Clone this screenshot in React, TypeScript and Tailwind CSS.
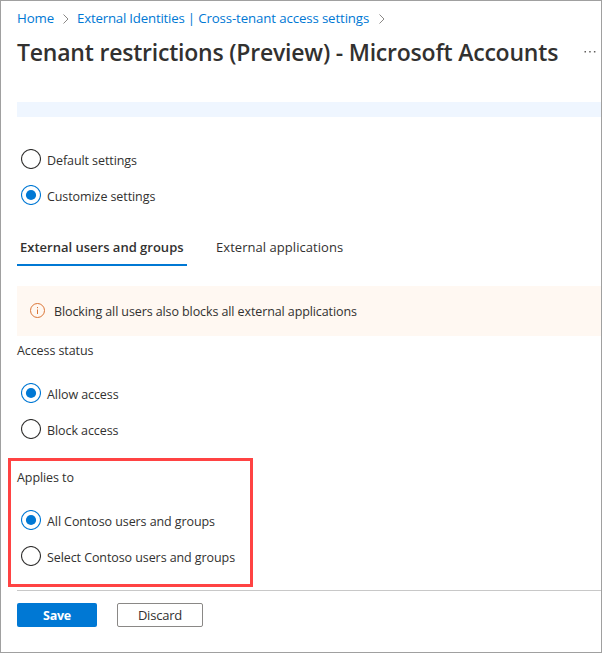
import type { ReactNode } from "react";

function Chevron() {
  return (
    <svg className="h-3 w-2 shrink-0" viewBox="0 0 8 12" fill="none" stroke="#8a8886" strokeWidth="1">
      <path d="M1.5 1.5 6 6 1.5 10.5" />
    </svg>
  );
}

function Radio({ checked = false, children }: { checked?: boolean; children: ReactNode }) {
  return (
    <label className="flex h-5 items-center gap-1.5 pl-1">
      <svg className="h-5 w-5 shrink-0" viewBox="0 0 20 20">
        <circle cx="10" cy="10" r="9.5" fill="#fff" stroke={checked ? "#0078d4" : "#323130"} strokeWidth="1.1" />
        {checked && <circle cx="10" cy="10" r="5.1" fill="#0078d4" />}
      </svg>
      <span className="pt-1 leading-5">{children}</span>
    </label>
  );
}

export default function App() {
  return (
    <div className="flex h-[653px] w-[602px] flex-col overflow-hidden border border-[#a0a0a0] bg-white pl-4 font-['Open_Sans','Noto_Sans',sans-serif] text-[12.5px] tracking-[-0.085px] whitespace-nowrap text-[#323130]">
      <nav className="mt-2 flex h-5 items-center text-[13.25px] tracking-[-0.12px] text-[#0078d4]">
        <a className="w-[45px]">Home</a>
        <Chevron />
        <a className="ml-[7px] w-[301px]">
          <span className="tracking-[-0.2px]">External Identities | </span>
          Cross-tenant access settings
        </a>
        <Chevron />
      </nav>

      <header className="mt-[7px] flex h-8 items-center">
        <h1 className="w-[567px] text-[23px] leading-8 font-semibold tracking-[-0.21px]">
          Tenant restrictions (Preview) - Microsoft Accounts
        </h1>
        <svg className="h-1 w-3 shrink-0" viewBox="0 0 12 4" fill="#605e5c">
          <rect x="0.5" y="1" width="1.5" height="1.5" />
          <rect x="5.2" y="1" width="1.5" height="1.5" />
          <rect x="9.9" y="1" width="1.5" height="1.5" />
        </svg>
      </header>

      <div className="mt-[34px] h-[15px] shrink-0 bg-[#eff6ff]" />

      <div className="mt-8 flex flex-col gap-4">
        <Radio>Default settings</Radio>
        <Radio checked>Customize settings</Radio>
      </div>

      <div className="mt-[25px] flex h-9 text-[13px] leading-[34px]">
        <div className="w-[170px] border-b-2 border-[#0078d4] pl-[3px] font-semibold tracking-normal">
          External users and groups
        </div>
        <div className="ml-[29px] tracking-[0.05px]">External applications</div>
      </div>

      <div className="mt-5 flex h-[50px] shrink-0 items-center gap-[9px] bg-[#fff8f2] pl-3">
        <svg className="h-4 w-4 shrink-0" viewBox="0 0 16 16" fill="none" stroke="#db7536">
          <circle cx="8.5" cy="7.5" r="7" />
          <path d="M8.5 6.5V11M8.5 4v1.2" />
        </svg>
        <span className="pt-0.5 tracking-[-0.1px]">Blocking all users also blocks all external applications</span>
      </div>

      <div className="mt-[5px] h-5 leading-5">Access status</div>
      <div className="mt-[22px] flex flex-col gap-4">
        <Radio checked>Allow access</Radio>
        <Radio>Block access</Radio>
      </div>

      <section className="mt-[19px] -ml-[9px] h-[129px] w-[245px] shrink-0 border-[3px] border-[#ff4343] pl-1.5">
        <div className="mt-[7px] h-5 leading-5">Applies to</div>
        <div className="mt-[22px] flex flex-col gap-4">
          <Radio checked>All Contoso users and groups</Radio>
          <Radio>Select Contoso users and groups</Radio>
        </div>
      </section>

      <footer className="mt-[3px] flex h-[37px] items-end gap-5 border-t border-[#c8c8c8] text-[13px]">
        <button className="h-6 w-20 rounded-[2px] bg-[#0078d4] pt-px text-[12.5px] leading-6 font-bold tracking-[-0.25px] text-white">
          Save
        </button>
        <button className="h-6 w-[86px] rounded-[2px] border border-[#8a8886] bg-white leading-[22px] tracking-[-0.2px]">
          Discard
        </button>
      </footer>
    </div>
  );
}
